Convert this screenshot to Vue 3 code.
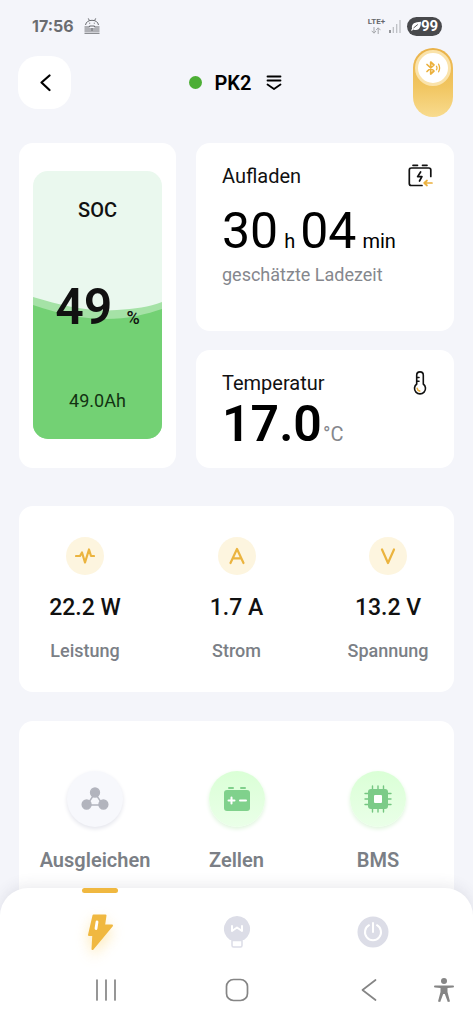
<script setup>
const stats = [
  { id: 'power', value: '22.2 W', label: 'Leistung' },
  { id: 'current', value: '1.7 A', label: 'Strom' },
  { id: 'voltage', value: '13.2 V', label: 'Spannung' },
]
const modules = [
  { id: 'balance', label: 'Ausgleichen' },
  { id: 'cells', label: 'Zellen' },
  { id: 'bms', label: 'BMS' },
]
</script>

<template>
  <div class="app">
    <div class="status">
      <div class="status-side">
        <span class="clock">17:56</span>
        <svg class="droid" viewBox="0 0 16 16" width="16" height="16" fill="none" stroke="#6a6c70">
          <path d="M1.500 7C2 4 4.500 2.300 8 2.300S14 4 14.500 7M4.300.4l1.200 2.400M11.700.4l-1.200 2.400" />
          <path d="M.5 9h4.500l1-1h4l1 1h4.500M.5 11h15M.5 13h15M.5 15.300h15" stroke-width="1.100" />
          <path d="M5.200 5.200h1M9.800 5.200h1M8 10v3" />
        </svg>
      </div>
      <div class="status-side right">
        <div class="lte">
          <span>LTE+</span>
          <svg viewBox="0 0 10 7" width="10" height="7" fill="none" stroke="#a5a7ab"><path d="M3 0v6M.7 3.800 3 6.200l2-2.200M7.200 7V1M5 3.200 7.200.8l2.300 2.400" /></svg>
        </div>
        <svg class="signal" viewBox="0 0 12 13" width="12" height="13" stroke-width="1.200">
          <path d="M1 10v3" stroke="#55575b" /><path d="M4.300 7v6M7.700 4v9M11 0v13" stroke="#babcc0" />
        </svg>
        <div class="battery">
          <svg viewBox="0 0 10 10" width="10" height="10"><path d="M0 9.500C.2 8.800.7 8.300 1 8 .2 2.500 4 1 10 .8 9.800 6 8.500 9 5 9c-1.200 0-2-.2-2.800-.6L1 9.800z" fill="#fff" /><path d="M2.500 7 6.800 3.500" stroke="#48494c" stroke-width=".9" /></svg>
          <span>99</span>
        </div>
      </div>
    </div>

    <header class="header">
      <button class="back" type="button" aria-label="Zurück">
        <svg viewBox="0 0 12 18" width="12" height="18" fill="none" stroke="#000" stroke-width="2.200" stroke-linecap="round" stroke-linejoin="round"><path d="M10.500 1.500 2.500 8.500l8 7.500" /></svg>
      </button>
      <button class="device" type="button">
        <span class="dot"></span>
        <span>PK2</span>
        <svg viewBox="0 0 16 16" width="16" height="16" fill="none" stroke="#000" stroke-width="1.800" stroke-linecap="round" stroke-linejoin="round"><path d="M1.500 1.500h13M1.500 5.500h13M1.500 9.500 8 14l6.500-4.500" /></svg>
      </button>
      <button class="toggle" type="button" aria-label="Bluetooth" aria-pressed="true">
        <span class="knob">
          <svg viewBox="0 0 16 16" width="16" height="16" fill="none" stroke="#ebb03c" stroke-width="1.700" stroke-linejoin="round" stroke-linecap="round"><path d="m2 4.500 7 6.500-3.300 3V2L9 5l-7 6.500" /><path d="M11.500 6.200q1 1.800 0 3.600M13.600 4.200q2 3.800 0 7.600" stroke-width="1.300" /></svg>
        </span>
      </button>
    </header>

    <main class="content">
      <section class="overview">
        <div class="card soc">
          <div class="tank">
            <svg class="wave" viewBox="0 0 129 268" preserveAspectRatio="none">
              <path d="M0 126c30 9 58 15 84 13 18-1 32-3 45-8v137H0z" fill="#a5e2a6" />
              <path d="M0 134c27 9 50 14 72 14 24 0 42-5 57-10v130H0z" fill="#73d174" />
            </svg>
            <div class="soc-title">SOC</div>
            <div class="soc-value">49<small>%</small></div>
            <div class="soc-ah">49.0Ah</div>
          </div>
        </div>

        <div class="card info charge">
          <div class="info-head">
            <h2>Aufladen</h2>
            <svg viewBox="0 0 26 24" width="26" height="24" fill="none" stroke="#111" stroke-width="1.700" stroke-linecap="round" stroke-linejoin="round">
              <path d="M5 1.300h4.500M14.500 1.300H19" />
              <path d="M22.800 12.500V6q0-2-2-2H3.500Q1.300 4 1.300 6v13.500q0 2 2 2H14" />
              <path d="m12.600 8-3 4.600h4.300L11.500 17" />
              <path d="M24 19h-7.500m2.500-2.500L16.200 19l2.800 2.500" stroke="#ebb03c" />
            </svg>
          </div>
          <div class="time">30<small>h</small>04<small>min</small></div>
          <div class="hint">geschätzte Ladezeit</div>
        </div>

        <div class="card info temp">
          <div class="info-head">
            <h2>Temperatur</h2>
            <svg class="thermo" viewBox="0 0 14 24" width="14" height="24" fill="none" stroke="#111" stroke-width="1.600" stroke-linecap="round">
              <path d="M3.700 13V4.200a3.300 3.300 0 0 1 6.600 0V13a5.500 5.500 0 1 1-6.600 0z" />
              <path d="M4 6.500h2M4 10.200h2" />
              <path d="M4.200 17.300a3.400 3.400 0 0 0 2.500 2.800" stroke="#ebb03c" />
            </svg>
          </div>
          <div class="degrees">17.0<small>°C</small></div>
        </div>
      </section>

      <section class="card stats">
        <div v-for="s in stats" :key="s.id" class="stat">
          <span class="stat-icon">
            <svg viewBox="0 0 20 18" width="20" height="18" fill="none" stroke="#ebb43f" stroke-width="2.200" stroke-linecap="round" stroke-linejoin="round">
              <path v-if="s.id === 'power'" d="M1 9h4l2-3.500L10 15.500l4-13L16 9h3" />
              <path v-else-if="s.id === 'current'" d="M3.500 16 10 2l6.500 14M6 11.300h8" />
              <path v-else d="m4 2.500 6 13.500 6-13.500" />
            </svg>
          </span>
          <strong>{{ s.value }}</strong>
          <span class="stat-label">{{ s.label }}</span>
        </div>
      </section>

      <section class="card modules">
        <button v-for="m in modules" :key="m.id" type="button" class="module">
          <span class="module-icon" :class="m.id">
            <svg v-if="m.id === 'balance'" viewBox="0 0 28 28" width="28" height="28" fill="#b2b4bd" stroke="#b2b4bd" stroke-width="1.500">
              <path d="M14 8 6 20h16z" fill="none" /><circle cx="14" cy="7.500" r="4.400" /><circle cx="5.600" cy="19.500" r="4.400" /><circle cx="22.400" cy="19.500" r="4.400" />
            </svg>
            <svg v-else-if="m.id === 'cells'" viewBox="0 0 28 28" width="28" height="28">
              <rect x="5" y="2" width="6" height="2" rx="1" fill="#80d08b" /><rect x="17" y="2" width="6" height="2" rx="1" fill="#80d08b" />
              <rect x="1" y="5" width="26" height="21" rx="3" fill="#80d18c" />
              <path d="M5.500 15.500h6M8.500 12.500v6M17 15.500h6" stroke="#fff" stroke-width="2" stroke-linecap="round" />
            </svg>
            <svg v-else viewBox="0 0 28 28" width="28" height="28">
              <path d="M8.500 1v26M14 1v26M19.500 1v26M1 8.500h26M1 14h26M1 19.500h26" stroke="#74c681" stroke-width="1.400" stroke-linecap="round" />
              <rect x="4" y="4" width="20" height="20" rx="3" fill="#7ccb88" /><rect x="10" y="10" width="8" height="8" rx="1" fill="#fff" />
            </svg>
          </span>
          <span class="module-label">{{ m.label }}</span>
        </button>
      </section>
    </main>

    <footer class="bottom">
      <nav class="tabs">
        <button type="button" class="tab active" aria-label="Batterie">
          <svg class="bolt" viewBox="-1 0 28 38" width="28" height="38">
            <path d="M6.500 1.500h12L17 11.500h8L5.500 35l.8-14H2z" fill="#f0b840" stroke="#f0b840" stroke-width="2" stroke-linejoin="round" />
            <path d="m10 8-1 6.500" stroke="#fff" stroke-width="2.800" stroke-linecap="round" />
          </svg>
        </button>
        <button type="button" class="tab" aria-label="Verbraucher">
          <svg viewBox="0 0 28 34" width="28" height="34">
            <path d="M14 1a13 13 0 0 1 7 24H7A13 13 0 0 1 14 1z" fill="#dcdde7" />
            <path d="M9 25.500h10v5q0 1.500-1.500 1.500h-7Q9 32 9 30.500z" fill="#fff" stroke="#dcdde7" stroke-width="1.500" />
            <path d="M9 11v5l5-3.500 5 3.500v-5" fill="none" stroke="#fff" stroke-width="2" stroke-linejoin="round" stroke-linecap="round" />
          </svg>
        </button>
        <button type="button" class="tab" aria-label="Ein/Aus">
          <svg viewBox="0 0 32 32" width="32" height="32">
            <circle cx="16" cy="16" r="15.500" fill="#dcdde7" />
            <path d="M12 9.200a8 8 0 1 0 8 0M16 7v9" fill="none" stroke="#fff" stroke-width="2" stroke-linecap="round" />
          </svg>
        </button>
      </nav>
      <div class="system">
        <button type="button" aria-label="Letzte Apps"><svg viewBox="0 0 24 24" width="24" height="24" stroke="#858585" stroke-width="1.700" stroke-linecap="round"><path d="M3 2v20M12 2v20M21 2v20" /></svg></button>
        <button type="button" aria-label="Startbildschirm"><svg viewBox="0 0 24 24" width="24" height="24" fill="none" stroke="#858585" stroke-width="1.700"><rect x="1.500" y="1.500" width="21" height="21" rx="7" /></svg></button>
        <button type="button" aria-label="Zurück navigieren"><svg viewBox="0 0 24 24" width="24" height="24" fill="none" stroke="#858585" stroke-width="1.700" stroke-linecap="round" stroke-linejoin="round"><path d="M19.500 2 6.500 12l13 10" /></svg></button>
        <button type="button" aria-label="Bedienungshilfen"><svg viewBox="0 0 20 24" width="20" height="24" fill="#858585"><circle cx="10" cy="3" r="3" /><path d="M1 7.500h18q1 0 1 1t-1 1.100l-5.500.4V14l2.500 9.500-2.200.5-3-8H9.200l-3 8L4 23.500 6.500 14v-4L1 9.600Q0 9.500 0 8.500t1-1z" /></svg></button>
      </div>
    </footer>
  </div>
</template>

<style>
body { background: #f4f5fa; }
</style>

<style scoped>
* { box-sizing: border-box; }
button { border: 0; padding: 0; background: none; font: inherit; color: inherit; }
svg { display: block; flex: none; }
.app {
  min-height: 100vh;
  display: flex;
  flex-direction: column;
  background: #f4f5fa;
  font-family: Roboto, "Noto Sans", sans-serif;
  color: #111;
}
.status {
  height: 48px;
  padding: 4px 31px 0 32px;
  display: flex;
  align-items: center;
  justify-content: space-between;
}
.status-side { display: flex; align-items: center; gap: 10px; }
.status-side.right { gap: 4px; }
.clock { font-family: Inter, sans-serif; font-size: 16px; font-weight: 700; color: #6a6c70; }
.lte { display: flex; flex-direction: column; align-items: center; font: 700 8px/8px Roboto, sans-serif; color: #66686c; gap: 1px; }
.signal { margin-right: 2px; }
.battery {
  height: 19px;
  width: 35px;
  border-radius: 10px;
  background: #48494c;
  color: #fff;
  display: flex;
  align-items: center;
  justify-content: center;
  font: 700 15px/19px Roboto, sans-serif;
}
.header {
  height: 69px;
  padding: 0 20px 0 18px;
  display: grid;
  grid-template-columns: 1fr auto 1fr;
  align-items: center;
}
.back {
  width: 53px;
  height: 53px;
  border-radius: 20px;
  background: #fff;
  display: grid;
  place-items: center;
}
.device { display: flex; align-items: center; gap: 13px; font-size: 20px; font-weight: 600; color: #000; line-height: 24px; }
.device svg { margin-left: 2px; }
.dot { width: 13px; height: 13px; border-radius: 50%; background: #4cae35; }
.toggle {
  justify-self: end;
  width: 40px;
  height: 69px;
  border-radius: 20px;
  padding-top: 2px;
  background: linear-gradient(#e9b148, #f1c560 55%, #f8db8e);
  display: flex;
  justify-content: center;
}
.knob {
  width: 36px;
  height: 36px;
  border: 3px solid #fae3ab;
  border-radius: 50%;
  background: #fff;
  display: grid;
  place-items: center;
}
.content {
  flex: 1;
  display: flex;
  flex-direction: column;
  padding: 26px 19px 0;
}
.card { background: #fff; border-radius: 14px; }
.overview {
  display: grid;
  grid-template-columns: 157fr 258fr;
  grid-template-rows: 188px 118px;
  gap: 19px 20px;
}
.soc { grid-row: span 2; padding: 28px 14px 29px; }
.tank {
  position: relative;
  height: 100%;
  border-radius: 15px;
  background: #eaf8ee;
  overflow: hidden;
  display: flex;
  flex-direction: column;
  align-items: center;
  justify-content: space-between;
  padding: 27px 0 26px;
  line-height: 24px;
}
.wave { position: absolute; inset: 0; width: 100%; height: 100%; }
.soc-title, .soc-value, .soc-ah { position: relative; }
.soc-title { font-size: 20px; font-weight: 500; }
.soc-value { font-size: 50px; font-weight: 600; line-height: 60px; padding-top: 14px; }
.soc-value small { font-size: 18px; font-weight: 500; margin-left: 14px; }
.soc-ah { font-size: 18px; color: #123312; }
.info { padding: 21px 20px 0 26px; }
.info-head { display: flex; justify-content: space-between; align-items: center; height: 24px; }
h2 { margin: 0; font-size: 20px; font-weight: 400; line-height: 24px; }
.time { font-size: 50px; line-height: 60px; margin-top: 13px; color: #000; white-space: nowrap; }
.time small { font-size: 20px; line-height: 24px; margin: 0 5px 0 6px; }
.hint { font-size: 18px; line-height: 24px; margin-top: 2px; color: #85878d; }
.thermo { margin-right: 7px; }
.degrees { font-size: 50px; font-weight: 600; line-height: 58px; color: #000; white-space: nowrap; }
.degrees small { font-size: 20px; line-height: 24px; margin-left: 1px; font-weight: 400; color: #85878d; }
.stats {
  margin-top: 38px;
  padding: 31px 26px 29px;
  display: flex;
  justify-content: space-between;
}
.stat { width: 80px; display: flex; flex-direction: column; align-items: center; white-space: nowrap; }
.stat-icon { width: 38px; height: 38px; border-radius: 50%; background: #fdf5df; display: grid; place-items: center; }
.stat strong { font-size: 23px; font-weight: 500; line-height: 28px; margin-top: 19px; }
.stat-label { font-size: 18px; font-weight: 500; line-height: 24px; margin-top: 17px; color: #7b7f86; }
.modules {
  flex: 1;
  margin-top: 29px;
  padding: 50px 20px 44px;
  display: flex;
  justify-content: space-between;
  align-items: flex-start;
  border-radius: 14px 14px 0 0;
}
.module { width: 112px; display: flex; flex-direction: column; align-items: center; }
.module-icon { width: 56px; height: 56px; border-radius: 50%; display: grid; place-items: center; }
.module-icon.balance { background: #f7f8fc; box-shadow: 0 2px 4px #e4e5ec; }
.module-icon.cells, .module-icon.bms { background: linear-gradient(#daffd6, #eaffe8); box-shadow: 0 2px 4px #def5dc; }
.module-label { font-size: 20px; font-weight: 600; line-height: 24px; margin-top: 21px; color: #7b7f86; }
.bottom {
  position: sticky;
  bottom: 0;
  margin-top: -28px;
  border-radius: 28px 28px 0 0;
  background: #fff;
  box-shadow: 0 -3px 14px rgba(60, 60, 90, .1);
  padding-bottom: 16px;
}
.tabs { display: flex; justify-content: space-between; padding: 0 82px; }
.tab { width: 36px; height: 84px; display: grid; justify-items: center; align-content: center; padding-top: 4px; }
.tab.active { grid-template-rows: 5px 1fr; align-items: center; padding-top: 0; }
.tab.active::before { content: ""; width: 36px; height: 5px; border-radius: 3px; background: #f0b840; }
.bolt { filter: drop-shadow(0 6px 7px rgba(250, 202, 80, .4)); }
.system { height: 36px; padding: 0 19px 0 40px; display: grid; grid-template-columns: 1fr 1fr 1fr 20px; place-items: center; }
</style>
